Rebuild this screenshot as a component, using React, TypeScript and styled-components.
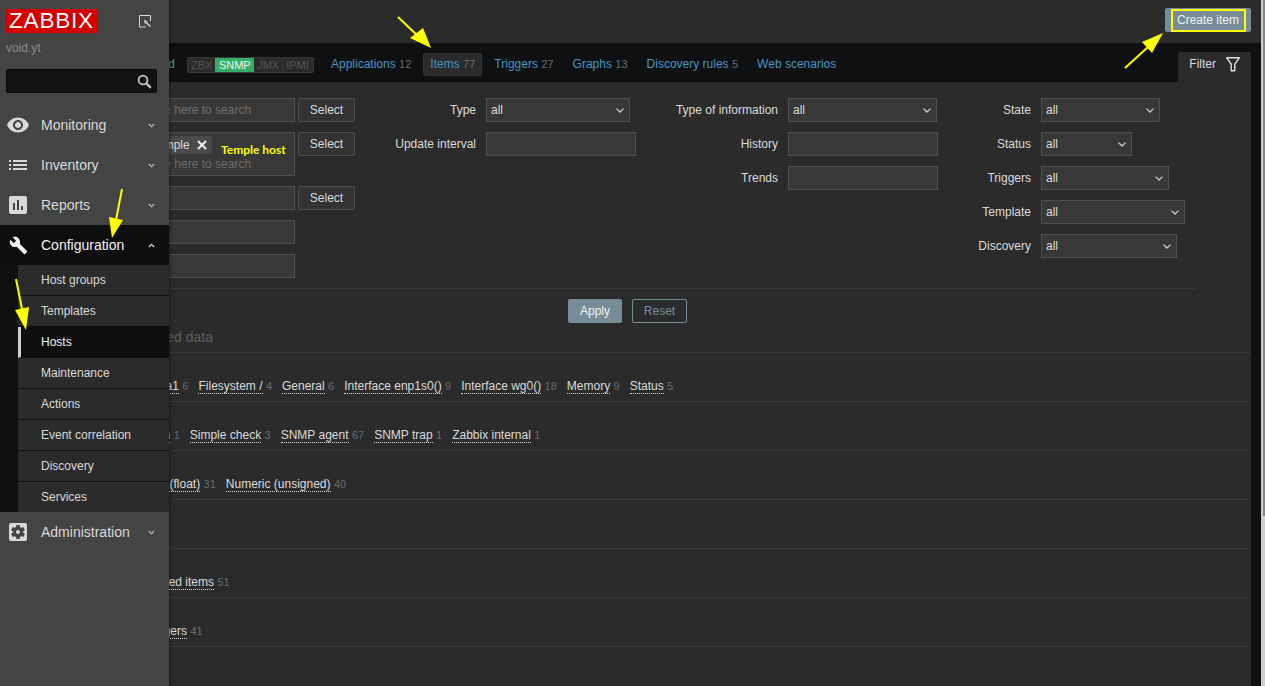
import React from 'react';
import styled, { createGlobalStyle } from 'styled-components';
import {
  MdRemoveRedEye,
  MdList,
  MdAssessment,
  MdBuild,
  MdSettingsApplications,
} from 'react-icons/md';

const GlobalStyle = createGlobalStyle`
  html, body {
    margin: 0;
    height: 100%;
    overflow: hidden;
    background: #0e1012;
  }
  body {
    font-family: "Liberation Sans", Arial, sans-serif;
    font-size: 12px;
    color: #f2f2f2;
  }
  *, *::before, *::after {
    box-sizing: border-box;
  }
`;

const Page = styled.div`
  position: relative;
  display: flex;
  width: 100%;
  height: 100vh;
  overflow: hidden;
`;

const Main = styled.main`
  flex: 1;
  min-width: 0;
  display: flex;
  flex-direction: column;
  padding-left: 49px;
  background: #0e1012;
`;

const Scrollbar = styled.div`
  width: 4px;
  flex: none;
  display: flex;
  justify-content: flex-end;
  align-items: flex-start;
  background: #cfcfcf;
`;

const ScrollThumb = styled.div`
  width: 2px;
  height: 516px;
  background: #858585;
`;

/* ---- sidebar ---- */

const Sidebar = styled.aside`
  position: absolute;
  left: 0;
  top: 0;
  bottom: 0;
  width: 169px;
  z-index: 5;
  background: #444444;
  box-shadow: 1px 0 3px rgba(0, 0, 0, 0.4);
`;

const SidebarHead = styled.div`
  display: flex;
  justify-content: space-between;
  padding: 9px 17px 0 6px;
`;

const Logo = styled.div`
  width: 91px;
  height: 24px;
  background: #d40000;
  color: #ffffff;
  font-size: 22.5px;
  line-height: 24px;
  letter-spacing: 0.8px;
  text-align: center;
`;

const CollapseIcon = styled.svg`
  margin-top: 6px;
`;

const ServerName = styled.div`
  padding: 8px 6px 0;
  line-height: 14px;
  color: #8a8a8a;
`;

const SearchBox = styled.div`
  position: relative;
  margin: 14px 12px 12px 6px;
  height: 24px;
`;

const SearchInput = styled.input`
  display: block;
  width: 100%;
  height: 100%;
  background: #111214;
  border: 1px solid #0a0a0a;
  border-radius: 2px;
  outline: none;
`;

const SearchIcon = styled.svg`
  position: absolute;
  right: 5px;
  top: 5px;
`;

const MenuRow = styled.div<{ $open?: boolean }>`
  display: flex;
  align-items: center;
  height: 40px;
  font-size: 14px;
  padding-left: 6px;
  color: ${(p) => (p.$open ? '#f2f2f2' : '#d9d9d9')};
  background: ${(p) => (p.$open ? '#0e0e0e' : 'transparent')};
`;

const MenuIconSlot = styled.span<{ $size?: number }>`
  display: flex;
  justify-content: center;
  align-items: center;
  width: 24px;
  height: 24px;
  flex: none;
  font-size: ${(p) => p.$size ?? 24}px;
  margin-right: 11px;
`;

const MenuLabel = styled.span`
  flex: 1;
`;

const Chevron = styled.svg`
  display: block;
  flex: none;
`;

const MenuChevron = styled(Chevron)`
  margin-right: 14px;
`;

const SubMenu = styled.div`
  padding-left: 18px;
  background: #0e1012;
`;

const SubItem = styled.div<{ $active?: boolean }>`
  display: flex;
  align-items: center;
  height: 31px;
  padding-left: ${(p) => (p.$active ? '20px' : '23px')};
  color: ${(p) => (p.$active ? '#f2f2f2' : '#d9d9d9')};
  background: ${(p) => (p.$active ? '#0e0e0e' : '#2b2b2b')};
  border-bottom: 1px solid #0e1012;
  border-left: ${(p) => (p.$active ? '3px solid #cfcfcf' : '0')};

  &:last-child {
    height: 30px;
    border-bottom: 0;
  }
`;

/* ---- header ---- */

const Header = styled.header`
  height: 43px;
  flex: none;
  display: flex;
  justify-content: flex-end;
  padding: 8px 10px 0 10px;
  background: #2b2b2b;
`;

const CreateButton = styled.button`
  position: relative;
  width: 86px;
  height: 24px;
  padding: 0;
  border: 0;
  border-radius: 2px;
  background: #768d99;
  color: #f2f2f2;
  font: inherit;

  &::after {
    content: '';
    position: absolute;
    left: 6px;
    top: 1px;
    width: 75px;
    height: 23px;
    border: 2px solid #ffff00;
  }
`;

/* ---- tabs row ---- */

const Content = styled.div`
  flex: 1;
  min-height: 0;
  display: flex;
  flex-direction: column;
  padding-right: 10px;
`;

const NavRow = styled.nav`
  flex: none;
  height: 39px;
  display: flex;
  align-items: flex-start;
  padding-top: 10px;
`;

const HostStatus = styled.div`
  flex: none;
  width: 126px;
  text-align: right;
  line-height: 23px;
  color: #34af67;
`;

const Availability = styled.div`
  flex: none;
  display: flex;
  width: 127px;
  height: 16px;
  margin: 4px 10px 0 12px;
  border: 1px solid #383838;
  border-radius: 2px;
  background: #2b2b2b;
  font-size: 11px;
`;

const AvailabilityItem = styled.span<{ $on?: boolean; $sep?: boolean }>`
  padding: 0 ${(p) => (p.$on ? '3.5px' : '3px')};
  line-height: 14px;
  color: ${(p) => (p.$on ? '#f2f2f2' : '#555555')};
  background: ${(p) => (p.$on ? '#34af67' : 'transparent')};
  border-left: ${(p) => (p.$sep ? '1px solid #383838' : '0')};
`;

const Tab = styled.a<{ $active?: boolean }>`
  flex: none;
  height: 23px;
  margin-right: 5px;
  padding: 0 ${(p) => (p.$active ? '6px' : '7px')};
  line-height: ${(p) => (p.$active ? '21px' : '22px')};
  color: #4796c4;
  border-radius: 2px;
  background: ${(p) => (p.$active ? '#2b2b2b' : 'transparent')};
  border: ${(p) => (p.$active ? '1px solid #323232' : '0')};
`;

const Count = styled.span`
  color: #686c71;
  font-size: 11px;
  margin-left: 3.4px;
`;

const FilterTab = styled.div`
  flex: none;
  display: flex;
  align-items: flex-start;
  gap: 10px;
  height: 30px;
  margin: -1px 0 0 auto;
  padding: 5px 11px 0;
  line-height: 14px;
  border-radius: 2px 2px 0 0;
  background: #2b2b2b;
  color: #dcdcdc;
`;

/* ---- filter form ---- */

const Panel = styled.section`
  flex: 1;
  min-height: 0;
  overflow: hidden;
  background: #2b2b2b;
`;

const FilterForm = styled.form`
  margin: 0 55px 0 10px;
`;

const FilterColumns = styled.div`
  display: flex;
  gap: 10px;
  padding: 16px 0 10px;
  border-bottom: 1px solid #383838;
`;

const FilterColumn = styled.div<{ $width: number; $indent?: number }>`
  flex: none;
  width: ${(p) => p.$width}px;
  padding-left: ${(p) => p.$indent ?? 0}px;
  display: flex;
  flex-direction: column;
  gap: 10px;
`;

const FieldRow = styled.div`
  display: flex;
  align-items: flex-start;
`;

const FieldLabel = styled.label<{ $width: number }>`
  flex: none;
  width: ${(p) => p.$width}px;
  margin-right: 10px;
  line-height: 24px;
  text-align: right;
  color: #dcdcdc;
`;

const TextInput = styled.input<{ $width: number }>`
  display: block;
  width: ${(p) => p.$width}px;
  height: 24px;
  padding: 0 4px;
  background: #383838;
  border: 1px solid #4f4f4f;
  outline: none;
  color: #f2f2f2;
  font: inherit;

  &::placeholder {
    color: #6d6d6d;
    opacity: 1;
  }
`;

const MultiSelect = styled.div`
  position: relative;
  width: 155px;
  height: 44px;
  padding: 3px 4px 0;
  background: #383838;
  border: 1px solid #4f4f4f;
`;

const HostTag = styled.div`
  display: flex;
  align-items: center;
  justify-content: space-between;
  width: 67px;
  height: 18px;
  padding: 0 5px 0 6px;
  background: #4a4a4a;
  border-radius: 2px;
  color: #dcdcdc;
`;

const MultiPlaceholder = styled.div`
  margin-top: 3px;
  line-height: 14px;
  color: #6d6d6d;
`;

const Callout = styled.span`
  position: absolute;
  left: 80px;
  top: 10px;
  font-family: "Lato", "Open Sans", sans-serif;
  font-weight: 700;
  font-size: 12px;
  line-height: 14px;
  white-space: nowrap;
  color: #ffff00;
`;

const SelectButton = styled.button`
  flex: none;
  width: 57px;
  height: 24px;
  margin-left: 3px;
  padding: 0;
  background: #333333;
  border: 1px solid #4f4f4f;
  border-radius: 2px;
  color: #dcdcdc;
  font: inherit;
`;

const SelectBox = styled.div<{ $width: number }>`
  display: flex;
  align-items: center;
  justify-content: space-between;
  width: ${(p) => p.$width}px;
  height: 24px;
  padding: 0 4px 0 4px;
  background: #383838;
  border: 1px solid #4f4f4f;
  color: #dcdcdc;
`;

const FormButtons = styled.div`
  display: flex;
  justify-content: center;
  gap: 10px;
  padding-top: 10px;
`;

const ApplyButton = styled.button`
  width: 54px;
  height: 24px;
  padding: 0;
  background: #768d99;
  border: 0;
  border-radius: 2px;
  color: #f2f2f2;
  font: inherit;
`;

const ResetButton = styled(ApplyButton)`
  width: 55px;
  background: transparent;
  border: 1px solid #768d99;
  color: #768d99;
`;

/* ---- subfilter ---- */

const SubfilterTitle = styled.div`
  height: 30px;
  display: flex;
  align-items: center;
  justify-content: flex-end;
  padding: 0 1038px 1px 0;
  white-space: nowrap;
  font-size: 14px;
  color: #5e5e5e;
  border-bottom: 1px solid #383838;
`;

const SubfilterRow = styled.div<{ $indent?: number }>`
  height: 49px;
  display: flex;
  align-items: flex-end;
  padding: 0 0 7px ${(p) => p.$indent ?? 0}px;
  border-bottom: 1px solid #383838;
`;

const SubfilterItem = styled.span`
  flex: none;
  margin-right: 10px;
  line-height: 14px;
`;

const SubfilterLink = styled.a`
  display: inline-block;
  color: #dcdcdc;
  border-bottom: 1px dotted #dcdcdc;
`;

const Annotations = styled.svg`
  position: absolute;
  left: 0;
  top: 0;
  z-index: 10;
  pointer-events: none;
`;

const SelectChevron = styled(Chevron)`
  margin-right: 1px;
`;

const SelectField = ({ width }: { width: number }) => (
  <SelectBox $width={width}>
    all
    <SelectChevron width="8" height="5" viewBox="0 0 8 5">
      <path d="M.5.6 4 4 7.5.6" fill="none" stroke="#d0d0d0" strokeWidth="1.3" />
    </SelectChevron>
  </SelectBox>
);

const DownChevron = () => (
  <MenuChevron width="7" height="5" viewBox="0 0 8 5">
    <path d="M1 .8 4 3.8 7 .8" fill="none" stroke="#b8b8b8" strokeWidth="1.3" />
  </MenuChevron>
);

const menuTop = [
  { label: 'Monitoring', icon: <MdRemoveRedEye /> },
  { label: 'Inventory', icon: <MdList /> },
  { label: 'Reports', icon: <MdAssessment /> },
];

const subItems = ['Host groups', 'Templates', 'Hosts', 'Maintenance', 'Actions', 'Event correlation', 'Discovery', 'Services'];

const tabs = [
  { label: 'Applications', count: 12 },
  { label: 'Items', count: 77, active: true },
  { label: 'Triggers', count: 27 },
  { label: 'Graphs', count: 13 },
  { label: 'Discovery rules', count: 5 },
  { label: 'Web scenarios' },
];

// first link of each row runs under the sidebar, the indent puts its end where it shows
const subfilters: { indent: number; items: [string, number][] }[] = [
  {
    indent: 96.6,
    items: [
      ['/data1', 6],
      ['Filesystem /', 4],
      ['General', 6],
      ['Interface enp1s0()', 9],
      ['Interface wg0()', 18],
      ['Memory', 9],
      ['Status', 5],
    ],
  },
  {
    indent: 98.6,
    items: [
      ['item', 1],
      ['Simple check', 3],
      ['SNMP agent', 67],
      ['SNMP trap', 1],
      ['Zabbix internal', 1],
    ],
  },
  {
    indent: 72.5,
    items: [
      ['Numeric (float)', 31],
      ['Numeric (unsigned)', 40],
    ],
  },
  { indent: 0, items: [] },
  { indent: 53, items: [['Not discovered items', 51]] },
  { indent: 54, items: [['Without triggers', 41]] },
];

const arrows = [
  { line: '398,17 420,38', head: '431,48 410,38 423,28' },
  { line: '1125,68 1148,47', head: '1163,33 1142,42 1152,53' },
  { line: '122,189 116,220', head: '112,238 109,217 123,220' },
  { line: '16,279 22,309', head: '26,330 15,310 29,307' },
];

const App = () => (
  <Page>
    <GlobalStyle />
    <Main>
      <Header>
        <CreateButton type="button">Create item</CreateButton>
      </Header>
      <Content>
        <NavRow>
          <HostStatus>Enabled</HostStatus>
          <Availability>
            <AvailabilityItem>ZBX</AvailabilityItem>
            <AvailabilityItem $on>SNMP</AvailabilityItem>
            <AvailabilityItem>JMX</AvailabilityItem>
            <AvailabilityItem $sep>IPMI</AvailabilityItem>
          </Availability>
          {tabs.map((t) => (
            <Tab key={t.label} $active={t.active}>
              {t.label}
              {t.count !== undefined && <Count>{t.count}</Count>}
            </Tab>
          ))}
          <FilterTab>
            Filter
            <svg width="14" height="15" viewBox="0 0 14 15">
              <path d="M.7.8h12.6L8.8 7.2v6.6H5.2V7.2z" fill="none" stroke="#e0e0e0" strokeWidth="1.4" strokeLinejoin="round" />
            </svg>
          </FilterTab>
        </NavRow>
        <Panel>
          <FilterForm>
            <FilterColumns>
              <FilterColumn $width={296} $indent={81}>
                <FieldRow>
                  <TextInput $width={155} placeholder="Type here to search" />
                  <SelectButton type="button">Select</SelectButton>
                </FieldRow>
                <FieldRow>
                  <MultiSelect>
                    <HostTag>
                      Temple
                      <svg width="10" height="10" viewBox="0 0 10 10">
                        <path d="M1 1l8 8M9 1L1 9" stroke="#f2f2f2" strokeWidth="2" />
                      </svg>
                    </HostTag>
                    <MultiPlaceholder>Type here to search</MultiPlaceholder>
                    <Callout>Temple host</Callout>
                  </MultiSelect>
                  <SelectButton type="button">Select</SelectButton>
                </FieldRow>
                <FieldRow>
                  <TextInput $width={155} />
                  <SelectButton type="button">Select</SelectButton>
                </FieldRow>
                <FieldRow>
                  <TextInput $width={155} />
                </FieldRow>
                <FieldRow>
                  <TextInput $width={155} />
                </FieldRow>
              </FilterColumn>
              <FilterColumn $width={271}>
                <FieldRow>
                  <FieldLabel $width={111}>Type</FieldLabel>
                  <SelectField width={144} />
                </FieldRow>
                <FieldRow>
                  <FieldLabel $width={111}>Update interval</FieldLabel>
                  <TextInput $width={150} />
                </FieldRow>
              </FilterColumn>
              <FilterColumn $width={292}>
                <FieldRow>
                  <FieldLabel $width={132}>Type of information</FieldLabel>
                  <SelectField width={149} />
                </FieldRow>
                <FieldRow>
                  <FieldLabel $width={132}>History</FieldLabel>
                  <TextInput $width={150} />
                </FieldRow>
                <FieldRow>
                  <FieldLabel $width={132}>Trends</FieldLabel>
                  <TextInput $width={150} />
                </FieldRow>
              </FilterColumn>
              <FilterColumn $width={237}>
                <FieldRow>
                  <FieldLabel $width={83}>State</FieldLabel>
                  <SelectField width={119} />
                </FieldRow>
                <FieldRow>
                  <FieldLabel $width={83}>Status</FieldLabel>
                  <SelectField width={91} />
                </FieldRow>
                <FieldRow>
                  <FieldLabel $width={83}>Triggers</FieldLabel>
                  <SelectField width={128} />
                </FieldRow>
                <FieldRow>
                  <FieldLabel $width={83}>Template</FieldLabel>
                  <SelectField width={144} />
                </FieldRow>
                <FieldRow>
                  <FieldLabel $width={83}>Discovery</FieldLabel>
                  <SelectField width={136} />
                </FieldRow>
              </FilterColumn>
            </FilterColumns>
            <FormButtons>
              <ApplyButton type="button">Apply</ApplyButton>
              <ResetButton type="button">Reset</ResetButton>
            </FormButtons>
          </FilterForm>
          <SubfilterTitle>filtered data</SubfilterTitle>
          {subfilters.map((row, i) => (
            <SubfilterRow key={i} $indent={row.indent}>
              {row.items.map(([name, count]) => (
                <SubfilterItem key={name}>
                  <SubfilterLink>{name}</SubfilterLink>
                  <Count>{count}</Count>
                </SubfilterItem>
              ))}
            </SubfilterRow>
          ))}
        </Panel>
      </Content>
    </Main>
    <Scrollbar>
      <ScrollThumb />
    </Scrollbar>

    <Sidebar>
      <SidebarHead>
        <Logo>ZABBIX</Logo>
        <CollapseIcon width="13" height="13" viewBox="0 0 13 13">
          <path d="M7 12H.5V.5h11V6" fill="none" stroke="#d8d8d8" strokeWidth="1" />
          <path d="M5 5l3.5 1.2L7.6 7l4.4 4-1 1-4.4-4-.8.9z" fill="#d8d8d8" />
        </CollapseIcon>
      </SidebarHead>
      <ServerName>void.yt</ServerName>
      <SearchBox>
        <SearchInput />
        <SearchIcon width="15" height="15" viewBox="0 0 15 15">
          <circle cx="6" cy="6" r="4.4" fill="none" stroke="#c4c4c4" strokeWidth="1.8" />
          <path d="M9.4 9.4l4.4 4.4" stroke="#c4c4c4" strokeWidth="2.4" />
        </SearchIcon>
      </SearchBox>
      {menuTop.map((m) => (
        <MenuRow key={m.label}>
          <MenuIconSlot>{m.icon}</MenuIconSlot>
          <MenuLabel>{m.label}</MenuLabel>
          <DownChevron />
        </MenuRow>
      ))}
      <MenuRow $open>
        <MenuIconSlot $size={19}><MdBuild /></MenuIconSlot>
        <MenuLabel>Configuration</MenuLabel>
        <MenuChevron width="7" height="5" viewBox="0 0 8 5">
          <path d="M1 4.2 4 1.2 7 4.2" fill="none" stroke="#e0e0e0" strokeWidth="1.3" />
        </MenuChevron>
      </MenuRow>
      <SubMenu>
        {subItems.map((s) => (
          <SubItem key={s} $active={s === 'Hosts'}>{s}</SubItem>
        ))}
      </SubMenu>
      <MenuRow>
        <MenuIconSlot><MdSettingsApplications /></MenuIconSlot>
        <MenuLabel>Administration</MenuLabel>
        <DownChevron />
      </MenuRow>
    </Sidebar>

    <Annotations width="1265" height="686" viewBox="0 0 1265 686">
      {arrows.map((a) => (
        <g key={a.head}>
          <polyline points={a.line} fill="none" stroke="#ffff00" strokeWidth="2" />
          <polygon points={a.head} fill="#ffff00" />
        </g>
      ))}
    </Annotations>
  </Page>
);

export default App;
